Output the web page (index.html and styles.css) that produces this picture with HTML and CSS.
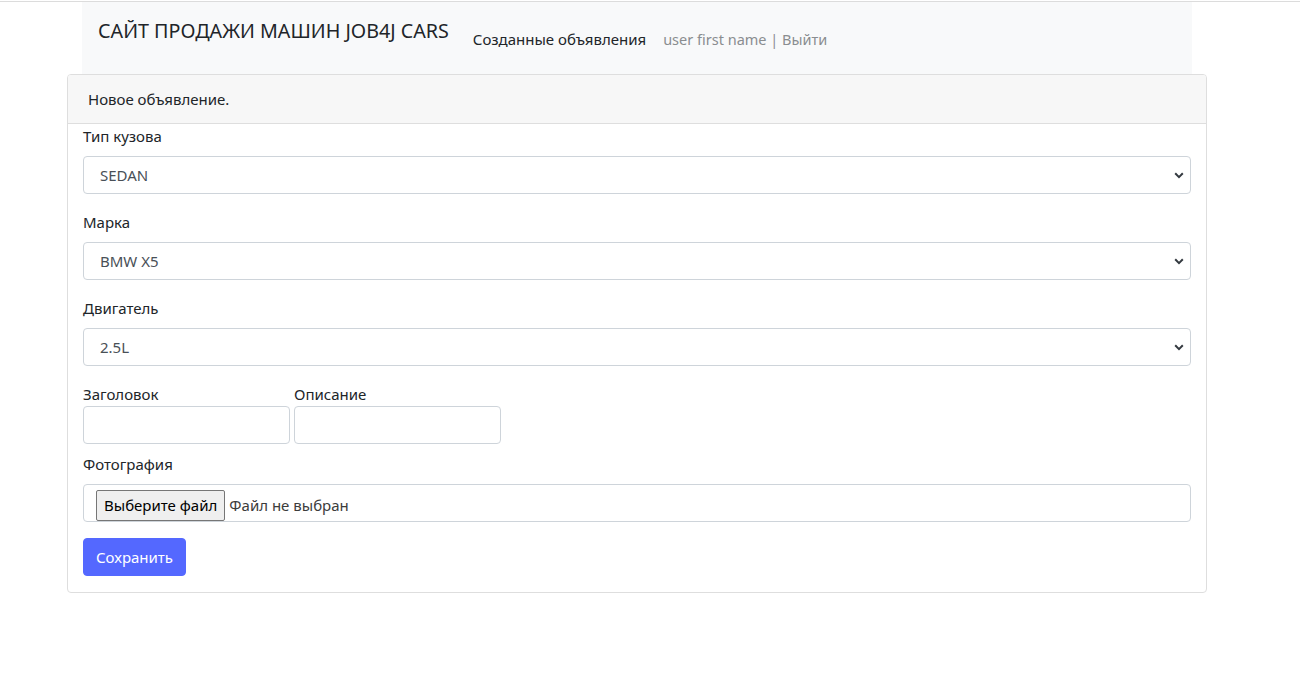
FILE: index.html
```html
<!DOCTYPE html>
<html lang="ru">
<head>
<meta charset="utf-8">
<title>Новое объявление</title>
<link rel="stylesheet" href="styles.css">
</head>
<body>
<div class="topline"></div>
<div class="container">
  <nav class="navbar">
    <span class="brand">САЙТ ПРОДАЖИ МАШИН JOB4J CARS</span>
    <a class="nav-link active" href="#">Созданные объявления</a>
    <a class="nav-link muted" href="#">user first name | Выйти</a>
  </nav>
  <div class="card">
    <div class="card-header">Новое объявление.</div>
    <form class="card-body">
      <div class="group">
        <label class="form-label" for="body">Тип кузова</label>
        <select class="form-select" id="body"><option>SEDAN</option></select>
      </div>
      <div class="group">
        <label class="form-label" for="mark">Марка</label>
        <select class="form-select" id="mark"><option>BMW X5</option></select>
      </div>
      <div class="group">
        <label class="form-label" for="engine">Двигатель</label>
        <select class="form-select" id="engine"><option>2.5L</option></select>
      </div>
      <div class="row-fields">
        <div class="field">
          <label class="form-label tight" for="title">Заголовок</label>
          <input class="form-control" id="title" type="text">
        </div>
        <div class="field">
          <label class="form-label tight" for="desc">Описание</label>
          <input class="form-control" id="desc" type="text">
        </div>
      </div>
      <div class="group photo">
        <span class="form-label">Фотография</span>
        <div class="file-input">
          <span class="file-btn">Выберите файл</span>
          <span class="file-name">Файл не выбран</span>
        </div>
      </div>
      <div>
        <button class="btn-primary" type="button">Сохранить</button>
      </div>
    </form>
  </div>
</div>
</body>
</html>
```
FILE: styles.css
```css
* { box-sizing: border-box; }
html, body { margin: 0; padding: 0; background: #fff; }
body {
  font-family: "Noto Sans", "Open Sans", "Liberation Sans", sans-serif;
  font-size: 15px;
  line-height: 24px;
  color: #212529;
}
.topline { height: 2px; border-top: 1px solid #fff; border-bottom: 1px solid #dcdcdc; }
.container { width: 1140px; margin-left: 67px; }
.navbar {
  margin: 0 15px;
  height: 72px;
  background: #f8f9fa;
  display: flex;
  align-items: flex-start;
  padding-left: 16px;
}
.brand {
  font-size: 19.7px;
  line-height: 30px;
  margin-top: 14px;
  margin-right: 16px;
  color: #212529;
  white-space: nowrap;
}
.nav-link {
  font-size: 15px;
  line-height: 24px;
  margin-top: 25px;
  text-decoration: none;
  padding: 0 8px;
}
.nav-link.active { color: #212529; }
.nav-link.muted { color: #8a8d90; font-size: 14.5px; padding-left: 9px; }
.card {
  border: 1px solid #dedede;
  border-radius: 4px;
  background: #fff;
}
.card-header {
  background: #f7f7f7;
  border-bottom: 1px solid #dedede;
  padding: 12px 20px;
  line-height: 24px;
  border-radius: 3px 3px 0 0;
}
.card-body { padding: 0 15px 16px 15px; display: flex; flex-direction: column; }
.group { margin-bottom: 16px; }
.form-label { display: block; margin-bottom: 8px; line-height: 24px; }
.form-label.tight { margin-bottom: 0; }
.form-select, .form-control {
  display: block;
  width: 100%;
  height: 38px;
  border: 1px solid #ced4da;
  border-radius: 4px;
  background: #fff;
  font: inherit;
  color: #495057;
}
.form-select {
  appearance: none;
  -webkit-appearance: none;
  padding: 0 32px 0 16px;
  background-image: url("data:image/svg+xml,%3Csvg xmlns='http://www.w3.org/2000/svg' viewBox='0 0 10 7'%3E%3Cpath d='M1.2 1.3 5 5.1 8.8 1.3' fill='none' stroke='%23343a40' stroke-width='2'/%3E%3C/svg%3E");
  background-repeat: no-repeat;
  background-position: right 6px center;
  background-size: 10px 7px;
}
.row-fields { display: flex; gap: 4px; margin-bottom: 8px; }
.field { width: 207px; }
.photo { margin-bottom: 16px; }
.file-input {
  height: 38px;
  border: 1px solid #ced4da;
  border-radius: 4px;
  display: flex;
  align-items: flex-end;
  padding-left: 12px;
  font-family: "Noto Sans", "Liberation Sans", sans-serif;
  font-size: 15px;
}
.file-btn {
  height: 31px;
  line-height: 29px;
  padding: 0 7px;
  border: 1px solid #767676;
  border-radius: 2px;
  background: #efefef;
  color: #000;
  margin-bottom: 0;
}
.file-name { margin-left: 4px; line-height: 31px; color: #3c3c3c; }
.btn-primary {
  height: 38px;
  padding: 0 12px;
  background: #5468ff;
  border: 1px solid #5468ff;
  border-radius: 4px;
  color: #fff;
  font: inherit;
}
```
